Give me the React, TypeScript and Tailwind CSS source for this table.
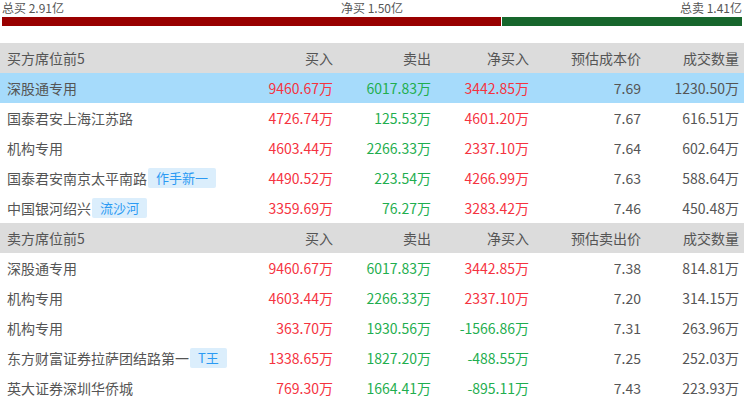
import React from "react";

type Row = {
  name: string;
  tag?: string;
  buy: string;
  sell: string;
  net: string;
  price: string;
  vol: string;
  active?: boolean;
};

const buyers: Row[] = [
  { name: "深股通专用", buy: "9460.67万", sell: "6017.83万", net: "3442.85万", price: "7.69", vol: "1230.50万", active: true },
  { name: "国泰君安上海江苏路", buy: "4726.74万", sell: "125.53万", net: "4601.20万", price: "7.67", vol: "616.51万" },
  { name: "机构专用", buy: "4603.44万", sell: "2266.33万", net: "2337.10万", price: "7.64", vol: "602.64万" },
  { name: "国泰君安南京太平南路", tag: "作手新一", buy: "4490.52万", sell: "223.54万", net: "4266.99万", price: "7.63", vol: "588.64万" },
  { name: "中国银河绍兴", tag: "流沙河", buy: "3359.69万", sell: "76.27万", net: "3283.42万", price: "7.46", vol: "450.48万" },
];

const sellers: Row[] = [
  { name: "深股通专用", buy: "9460.67万", sell: "6017.83万", net: "3442.85万", price: "7.38", vol: "814.81万" },
  { name: "机构专用", buy: "4603.44万", sell: "2266.33万", net: "2337.10万", price: "7.20", vol: "314.15万" },
  { name: "机构专用", buy: "363.70万", sell: "1930.56万", net: "-1566.86万", price: "7.31", vol: "263.96万" },
  { name: "东方财富证券拉萨团结路第一", tag: "T王", buy: "1338.65万", sell: "1827.20万", net: "-488.55万", price: "7.25", vol: "252.03万" },
  { name: "英大证券深圳华侨城", buy: "769.30万", sell: "1664.41万", net: "-895.11万", price: "7.43", vol: "223.93万" },
];

const grid = "grid grid-cols-[1fr_90px_98px_98px_112px_98px] items-center h-[30px] pl-[7px] pr-[5px]";

function Header({ title, priceLabel }: { title: string; priceLabel: string }) {
  return (
    <div className={`${grid} bg-[#dcdcdc] text-[#555]`}>
      <div>{title}</div>
      <div className="text-right">买入</div>
      <div className="text-right">卖出</div>
      <div className="text-right">净买入</div>
      <div className="text-right">{priceLabel}</div>
      <div className="text-right">成交数量</div>
    </div>
  );
}

function TableRow({ row }: { row: Row }) {
  const netNeg = row.net.startsWith("-");
  return (
    <div className={`${grid} ${row.active ? "bg-[#a6dbfb]" : "bg-white"}`}>
      <div className="flex items-center whitespace-nowrap text-[#555]">
        {row.name}
        {row.tag && (
          <span className="ml-px inline-flex h-5 items-center rounded-[2px] bg-[#dbeefc] px-2 text-[13px] text-[#2b9af3]">
            {row.tag}
          </span>
        )}
      </div>
      <div className="text-right text-[#f5333f]">{row.buy}</div>
      <div className="text-right text-[#1fae4f]">{row.sell}</div>
      <div className={`text-right ${netNeg ? "text-[#1fae4f]" : "text-[#f5333f]"}`}>{row.net}</div>
      <div className="text-right text-[#555]">{row.price}</div>
      <div className="text-right text-[#555]">{row.vol}</div>
    </div>
  );
}

export default function App() {
  return (
    <div className="w-[744px] h-[400px] overflow-hidden bg-white font-['Microsoft_YaHei','Noto_Sans_CJK_SC',sans-serif] text-[14px]">
      <div className="px-[2px]">
        <div className="flex h-[16px] items-center justify-between text-[12px] text-[#555]">
          <span>总买 2.91亿</span>
          <span>净买 1.50亿</span>
          <span>总卖 1.41亿</span>
        </div>
        <div className="mt-[1px] flex h-[9px] gap-[1px]">
          <div className="w-[499px] bg-[#990000]" />
          <div className="flex-1 bg-[#17662c]" />
        </div>
      </div>
      <div className="mt-[17px]">
        <Header title="买方席位前5" priceLabel="预估成本价" />
        {buyers.map((r, i) => (
          <TableRow key={"b" + i} row={r} />
        ))}
        <Header title="卖方席位前5" priceLabel="预估卖出价" />
        {sellers.map((r, i) => (
          <TableRow key={"s" + i} row={r} />
        ))}
      </div>
    </div>
  );
}
